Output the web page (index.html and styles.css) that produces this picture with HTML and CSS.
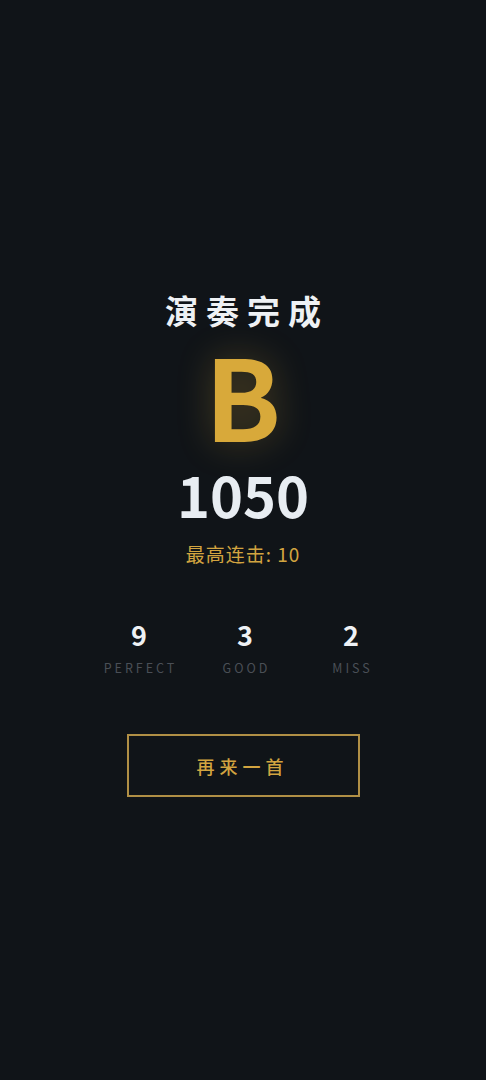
FILE: index.html
```html
<!DOCTYPE html>
<html lang="zh-CN">
<head>
  <meta charset="UTF-8" />
  <meta name="viewport" content="width=device-width, initial-scale=1.0" />
  <title>演奏完成</title>
  <link rel="stylesheet" href="styles.css">
</head>
<body>
<div class="result">
  <!-- 结算标题 -->
  <h1 class="result__title">演奏完成</h1>
  <div class="result__rank">B</div>
  <div class="result__score">1050</div>
  <div class="result__combo">最高连击: 10</div>

  <!-- 判定统计 -->
  <div class="result__stats">
    <div class="stat">
      <div class="stat__num">9</div>
      <div class="stat__label">PERFECT</div>
    </div>
    <div class="stat">
      <div class="stat__num">3</div>
      <div class="stat__label">GOOD</div>
    </div>
    <div class="stat">
      <div class="stat__num">2</div>
      <div class="stat__label">MISS</div>
    </div>
  </div>

  <button class="result__again">再来一首</button>
</div>
</body>
</html>
```

FILE: styles.css
```css
html, body {
  margin: 0;
  padding: 0;
}
body {
  background: #101418;
  color: #e8edf2;
  font-family: "Noto Sans CJK SC", "Noto Sans", sans-serif;
}

.result {
  display: flex;
  flex-direction: column;
  align-items: center;
  padding-top: 288px;
}

.result__title {
  margin: 0;
  font-size: 33px;
  font-weight: 700;
  letter-spacing: 8px;
  padding-left: 8px;
  line-height: 44px;
  color: #eef1f4;
}

.result__rank {
  margin-top: 5px;
  font-size: 112px;
  font-weight: 700;
  line-height: 112px;
  color: #d8a93a;
  text-shadow: 0 0 36px rgba(216, 169, 58, 0.3);
}

.result__score {
  margin-top: 17px;
  font-size: 56px;
  font-weight: 700;
  line-height: 56px;
  color: #e8edf2;
}

.result__combo {
  margin-top: 19px;
  font-size: 19px;
  letter-spacing: 1px;
  line-height: 26px;
  color: #d2a440;
}

.result__stats {
  margin-top: 51px;
  display: flex;
  gap: 0;
  padding-left: 4px;
}
.stat {
  width: 106px;
  display: flex;
  flex-direction: column;
  align-items: center;
}
.stat__num {
  font-size: 27px;
  font-weight: 700;
  line-height: 34px;
  color: #eef1f4;
}
.stat__label {
  margin-top: 7px;
  font-size: 12.5px;
  letter-spacing: 3px;
  padding-left: 3px;
  line-height: 18px;
  color: #4a4f56;
}

.result__again {
  margin-top: 57px;
  width: 233px;
  height: 63px;
  background: transparent;
  border: 2px solid #b08f45;
  color: #d2a440;
  font-family: inherit;
  font-size: 18px;
  font-weight: 500;
  letter-spacing: 5px;
  padding-left: 5px;
  cursor: pointer;
}
```
